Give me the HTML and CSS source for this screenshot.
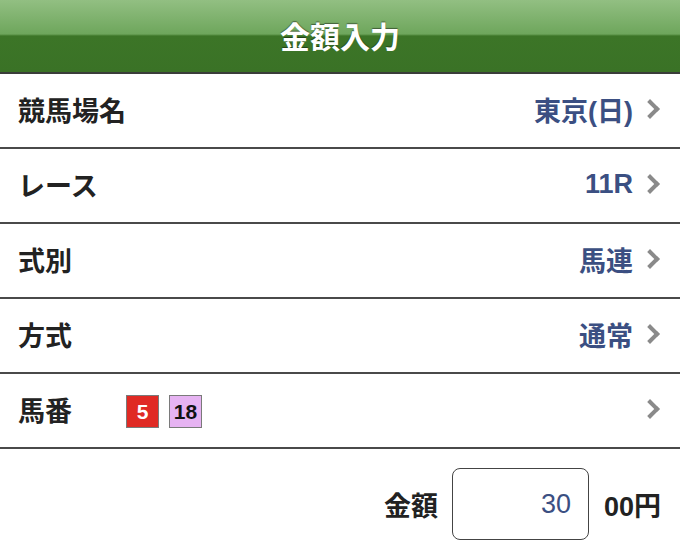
FILE: index.html
```html
<!DOCTYPE html>
<html lang="ja">
<head>
<meta charset="utf-8">
<link rel="stylesheet" href="styles.css">
</head>
<body>
<header class="bar"><h1 class="title">金額入力</h1></header>
<ul class="list">
  <li class="row"><span class="label">競馬場名</span><span class="value">東京(日)</span><span class="chev"></span></li>
  <li class="row"><span class="label">レース</span><span class="value">11R</span><span class="chev"></span></li>
  <li class="row"><span class="label">式別</span><span class="value">馬連</span><span class="chev"></span></li>
  <li class="row"><span class="label">方式</span><span class="value">通常</span><span class="chev"></span></li>
  <li class="row"><span class="label">馬番</span><span class="badges"><span class="badge red">5</span><span class="badge pink">18</span></span><span class="chev"></span></li>
</ul>
<div class="amount">
  <span class="amt-label">金額</span>
  <div class="input">30</div>
  <span class="unit">00円</span>
</div>
</body>
</html>
```
FILE: styles.css
```css
html, body { margin: 0; padding: 0; background: #fff; }
body { font-family: "Liberation Sans", "Noto Sans CJK JP", sans-serif; width: 680px; height: 556px; overflow: hidden; }
.bar {
  height: 72px;
  border-bottom: 2px solid #3a3d3a;
  background: linear-gradient(to bottom, #92bf82 0px, #6ea65c 34px, #3c7527 36px, #3a7226 72px);
  display: flex; align-items: center; justify-content: center;
}
.title {
  margin: 0 0 2px 0; color: #fff; font-size: 30px; font-weight: 700;
  font-family: "Noto Sans CJK JP", sans-serif;
  text-shadow: 0 -1px 1px rgba(0,0,0,0.45);
}
.list { list-style: none; margin: 0; padding: 0; }
.row {
  height: 73px; border-bottom: 2px solid #4a4a4a;
  display: flex; align-items: center; padding: 0 23px 0 18px;
}
.label { font-family: "Noto Sans CJK JP", sans-serif; font-weight: 700; font-size: 27px; color: #222; margin-top: -3px; }
.value { margin-left: auto; font-family: "Liberation Sans", "Noto Sans CJK JP", sans-serif; font-weight: 700; font-size: 27px; color: #3b4f82; margin-top: -3px; }
.chev {
  width: 10px; height: 10px; border-right: 4px solid #8a8a8a; border-top: 4px solid #8a8a8a;
  transform: rotate(45deg); margin-left: 10px; margin-top: -3px;
}
.badges { display: flex; gap: 10px; margin-left: 54px; margin-right: auto; margin-top: 2px; }
.badge {
  width: 31px; height: 31px; border: 1px solid #7a7a7a; box-sizing: content-box;
  display: flex; align-items: center; justify-content: center;
  font-weight: 700; font-size: 21px;
}
.red { background: #e02a24; color: #fff; }
.pink { background: #e6b3f2; color: #111; }
.amount { display: flex; align-items: center; justify-content: flex-end; padding: 19px 19px 0 0; }
.amt-label { font-family: "Noto Sans CJK JP", sans-serif; font-weight: 700; font-size: 27px; color: #222; margin-right: 14px; }
.input {
  width: 137px; height: 72px; box-sizing: border-box; border: 1.5px solid #444; border-radius: 8px;
  display: flex; align-items: center; justify-content: flex-end; padding-right: 17px;
  font-size: 27px; color: #3b4f82;
}
.unit { font-weight: 700; font-size: 27px; color: #222; margin-left: 15px; font-family: "Liberation Sans", "Noto Sans CJK JP", sans-serif; }
```
